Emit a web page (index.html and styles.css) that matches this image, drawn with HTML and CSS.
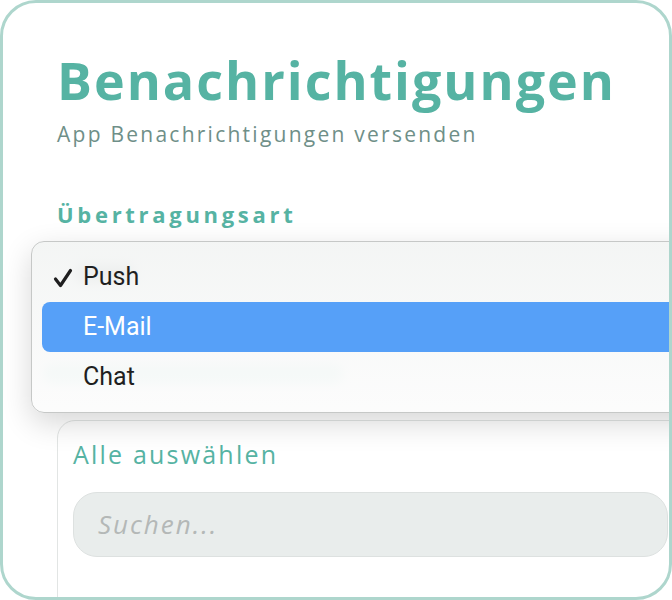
FILE: index.html
```html
<!DOCTYPE html>
<html lang="de">
<head>
<meta charset="utf-8">
<title>Benachrichtigungen</title>
<link rel="stylesheet" href="styles.css">
</head>
<body>
<div class="frame">
  <div class="content">
    <h1 class="title">Benachrichtigungen</h1>
    <p class="subtitle">App Benachrichtigungen versenden</p>
    <h2 class="label">Übertragungsart</h2>
    <div class="ghost">
      <div class="ghost-select"></div>
      <div class="ghost-chips"></div>
    </div>
    <div class="card">
      <div class="select-all">Alle auswählen</div>
      <div class="search">Suchen...</div>
    </div>
  </div>
  <ul class="menu">
    <li class="item"><svg class="check" viewBox="0 0 20 20" width="20" height="20"><path d="M2.5 11 L7.5 17.5 L17.5 2.5" fill="none" stroke="#1f1f1f" stroke-width="3.2" stroke-linecap="round" stroke-linejoin="round"/></svg>Push</li>
    <li class="item active">E-Mail</li>
    <li class="item">Chat</li>
  </ul>
</div>
</body>
</html>
```
FILE: styles.css
```css
html, body {
  margin: 0;
  padding: 0;
  background: #ffffff;
}
.frame {
  position: relative;
  width: 672px;
  height: 600px;
  box-sizing: border-box;
  border: 3px solid #aed6cd;
  border-radius: 36px;
  overflow: hidden;
  background: #ffffff;
}
.content {
  padding: 47px 0 0 54px;
  font-family: "Open Sans", sans-serif;
}
.title {
  margin: 0;
  font-size: 52px;
  line-height: 60px;
  font-weight: 700;
  color: #56b3a3;
  letter-spacing: 2px;
  white-space: nowrap;
}
.subtitle {
  margin: 11px 0 0 0;
  font-size: 21px;
  line-height: 26px;
  color: #6f8f88;
  letter-spacing: 2.25px;
  white-space: nowrap;
}
.label {
  margin: 55px 0 0 0;
  font-size: 22px;
  line-height: 24px;
  font-weight: 700;
  color: #56b3a3;
  letter-spacing: 3.7px;
  white-space: nowrap;
}
.ghost {
  height: 194px;
  box-sizing: border-box;
  padding: 40px 0 0 20px;
  display: flow-root;
}
.ghost-select {
  width: 56px;
  height: 16px;
  border-radius: 4px;
  background: #8a8a8a;
  filter: blur(6px);
  opacity: 0.6;
}
.ghost-chips {
  margin: 82px 0 0 -34px;
  width: 300px;
  height: 20px;
  border-radius: 10px;
  background: #b6e6da;
  filter: blur(5px);
  opacity: 0.8;
}
.card {
  width: 680px;
  height: 260px;
  box-sizing: border-box;
  border: 1px solid #e2e5e4;
  border-radius: 18px;
  padding: 18px 0 0 15px;
}
.select-all {
  font-size: 25px;
  line-height: 30px;
  color: #56b3a3;
  letter-spacing: 2.2px;
  white-space: nowrap;
}
.search {
  margin-top: 23px;
  width: 595px;
  height: 65px;
  box-sizing: border-box;
  border: 1px solid #dde1e0;
  border-radius: 24px;
  background: #e9edec;
  padding-left: 24px;
  font-size: 26px;
  line-height: 63px;
  font-style: italic;
  color: #b4b8b7;
  letter-spacing: 2px;
}
.menu {
  position: absolute;
  left: 28px;
  top: 238px;
  width: 700px;
  margin: 0;
  padding: 10px 0 10px 10px;
  list-style: none;
  box-sizing: border-box;
  border: 1px solid #c6c8c7;
  border-radius: 13px;
  background: linear-gradient(#f2f4f3e0, #fcfcfcec);
  box-shadow: 0 10px 30px rgba(0, 0, 0, 0.16);
  font-family: Roboto, sans-serif;
}
.item {
  position: relative;
  height: 50px;
  line-height: 50px;
  padding-left: 41px;
  font-size: 25px;
  color: #1f1f1f;
  border-radius: 8px 0 0 8px;
}
.item.active {
  background: #56a0f8;
  color: #ffffff;
}
.check {
  position: absolute;
  left: 11px;
  top: 16px;
}
```
